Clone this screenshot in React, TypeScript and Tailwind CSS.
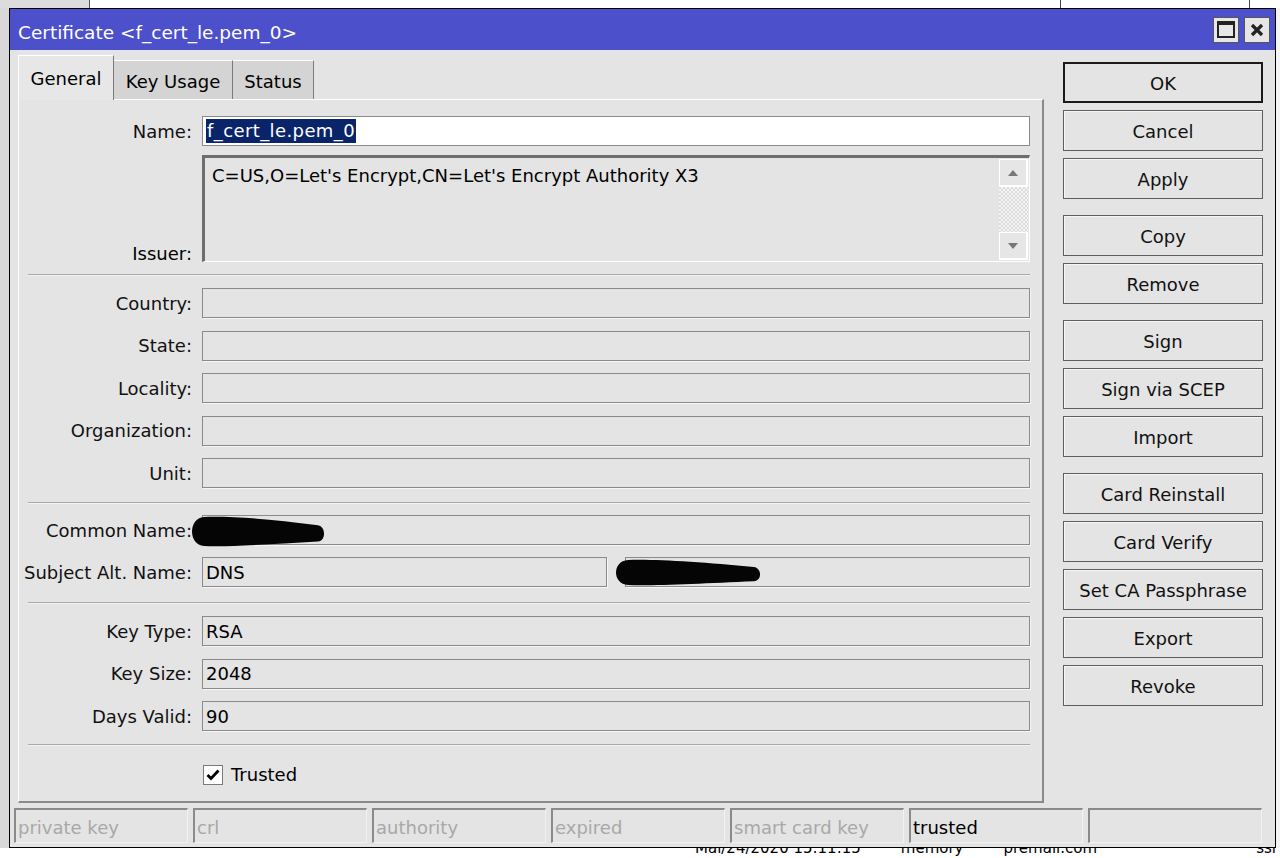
import React from "react";

const font = { fontFamily: '"DejaVu Sans", Verdana, sans-serif' };

const buttonGroups = [
  ["OK", "Cancel", "Apply"],
  ["Copy", "Remove"],
  ["Sign", "Sign via SCEP", "Import"],
  ["Card Reinstall", "Card Verify", "Set CA Passphrase", "Export", "Revoke"],
];

const statusCells = [
  { text: "private key", on: false },
  { text: "crl", on: false },
  { text: "authority", on: false },
  { text: "expired", on: false },
  { text: "smart card key", on: false },
  { text: "trusted", on: true },
  { text: "", on: false },
];

function Field({ value, className = "" }: { value?: string; className?: string }) {
  return (
    <div
      className={`h-[30px] border border-[#8a8a8a] bg-[#e4e4e4] shadow-[1px_1px_0_#f6f6f6] flex items-center pl-[3px] text-black ${className}`}
    >
      {value}
    </div>
  );
}

function Row({ label, children }: { label: string; children?: React.ReactNode }) {
  return (
    <div className="relative flex items-center">
      <div className="w-[173px] text-right text-[#111] whitespace-nowrap">{label}</div>
      <div className="ml-[10px] w-[828px] flex">{children}</div>
    </div>
  );
}

function Separator() {
  return <div className="ml-[9px] w-[1002px] border-t border-[#a9a9a9] border-b border-b-[#f3f3f3]" />;
}

function Redaction({ w, h, className }: { w: number; h: number; className: string }) {
  return (
    <svg width={w} height={h} viewBox={`0 0 ${w} ${h}`} className={`absolute ${className}`}>
      <path
        d={`M14 1 C40 0 ${w * 0.6} 3 ${w - 8} ${h * 0.3} C${w} ${h * 0.35} ${w} ${h * 0.8} ${w - 8} ${h * 0.82} C${w * 0.6} ${h * 0.9} 40 ${h} 14 ${h - 1} C-2 ${h - 2} -2 2 14 1 Z`}
        fill="#050505"
      />
    </svg>
  );
}

export default function App() {
  return (
    <div className="relative w-[1280px] h-[858px] overflow-hidden bg-white text-[18px]" style={font}>
      {/* window behind */}
      <div className="flex h-[8px]">
        <div className="w-[90px] bg-[#dcdcdc] border-r border-[#555]" />
        <div className="flex-1" />
        <div className="w-[190px] border-l border-r border-[#444] mr-[30px]" />
      </div>

      <div className="flex">
        <div className="w-[9px] bg-[#d8d8d8]" />
        {/* dialog */}
        <div className="flex flex-col w-[1267px] h-[840px] border border-black bg-[#e4e4e4]">
          {/* title bar */}
          <div className="h-[41px] bg-[#4d50cb] flex items-center pl-[8px] pr-[5px]">
            <span className="text-white text-[18.5px] pt-[7px]">Certificate &lt;f_cert_le.pem_0&gt;</span>
            <div className="ml-auto flex gap-[5px]">
              <div className="w-[26px] h-[26px] bg-[#e6e6e6] border border-[#555] flex items-center justify-center">
                <div className="w-[18px] h-[17px] border-2 border-t-[4px] border-[#222]" />
              </div>
              <div className="w-[26px] h-[26px] bg-[#e6e6e6] border border-[#555] flex items-center justify-center">
                <svg width="16" height="16" viewBox="0 0 16 16">
                  <path d="M3 3 L13 13 M13 3 L3 13" stroke="#222" strokeWidth="3.2" />
                </svg>
              </div>
            </div>
          </div>

          {/* body */}
          <div className="flex pl-[8px] pt-[5px]">
            <div className="w-[1026px] flex flex-col">
              {/* tabs */}
              <div className="flex items-end h-[44px]">
                <div className="h-[45px] w-[96px] bg-[#e7e7e7] border-t border-l border-white border-r border-r-[#7a7a7a] flex items-center justify-center -mb-px relative z-10">
                  General
                </div>
                <div className="h-[39px] w-[119px] bg-[#d4d4d4] border-t border-white border-r border-r-[#7a7a7a] flex items-center justify-center pt-[3px]">
                  Key Usage
                </div>
                <div className="h-[39px] w-[81px] bg-[#d4d4d4] border-t border-white border-r border-r-[#7a7a7a] flex items-center justify-center pt-[3px]">
                  Status
                </div>
              </div>

              {/* panel */}
              <div className="h-[704px] bg-[#e4e4e4] border-t border-l border-white border-r-2 border-r-[#8a8a8a] border-b-2 border-b-[#8a8a8a] pt-[16px] flex flex-col">
                <Row label="Name:">
                  <div className="h-[30px] w-full border border-[#8a8a8a] bg-white flex items-center pl-[3px]">
                    <span className="bg-[#0a246a] text-white px-[1px] leading-[24px] tracking-[0.4px]">f_cert_le.pem_0</span>
                  </div>
                </Row>

                <div className="flex items-end mt-[9px]">
                  <div className="w-[173px] text-right relative top-[5px]">Issuer:</div>
                  <div className="ml-[10px] w-[828px] h-[107px] bg-[#e4e4e4] border-t-[3px] border-l-[3px] border-[#6e6e6e] border-r border-b border-r-white border-b-white flex">
                    <div className="flex-1 pl-[7px] pt-[4px]">C=US,O=Let's Encrypt,CN=Let's Encrypt Authority X3</div>
                    <div className="w-[30px] flex flex-col pr-[1px] py-[1px]">
                      <div className="h-[28px] bg-[#e6e6e6] border-t border-l border-white border-r-2 border-b-2 border-[#555] flex items-center justify-center">
                        <svg width="12" height="8" viewBox="0 0 12 8">
                          <path d="M6 1 L11 7 L1 7 Z" fill="#777" />
                        </svg>
                      </div>
                      <div className="flex-1 bg-[repeating-conic-gradient(#f4f4f4_0%_25%,#dcdcdc_0%_50%)] bg-[length:4px_4px]" />
                      <div className="h-[28px] bg-[#e6e6e6] border-t border-l border-white border-r-2 border-b-2 border-[#555] flex items-center justify-center">
                        <svg width="12" height="8" viewBox="0 0 12 8">
                          <path d="M1 1 L11 1 L6 7 Z" fill="#777" />
                        </svg>
                      </div>
                    </div>
                  </div>
                </div>

                <div className="mt-[12px]">
                  <Separator />
                </div>

                <div className="mt-[12px] flex flex-col gap-[12.5px]">
                  <Row label="Country:"><Field className="w-full" /></Row>
                  <Row label="State:"><Field className="w-full" /></Row>
                  <Row label="Locality:"><Field className="w-full" /></Row>
                  <Row label="Organization:"><Field className="w-full" /></Row>
                  <Row label="Unit:"><Field className="w-full" /></Row>
                </div>

                <div className="mt-[14px]">
                  <Separator />
                </div>

                <div className="mt-[11px] flex flex-col gap-[12px]">
                  <Row label="Common Name:">
                    <Field className="w-full" />
                    <Redaction w={136} h={31} className="left-[171px] top-[1px]" />
                  </Row>
                  <Row label="Subject Alt. Name:">
                    <Field value="DNS" className="w-[405px]" />
                    <Field className="w-[405px] ml-[18px]" />
                    <Redaction w={148} h={27} className="left-[595px] top-[2px]" />
                  </Row>
                </div>

                <div className="mt-[15px]">
                  <Separator />
                </div>

                <div className="mt-[12px] flex flex-col gap-[12.5px]">
                  <Row label="Key Type:"><Field value="RSA" className="w-full" /></Row>
                  <Row label="Key Size:"><Field value="2048" className="w-full" /></Row>
                  <Row label="Days Valid:"><Field value="90" className="w-full" /></Row>
                </div>

                <div className="mt-[13px]">
                  <Separator />
                </div>

                <div className="mt-[15px] flex items-center pl-[184px]">
                  <div className="w-[20px] h-[20px] bg-white border border-[#7a7a7a] flex items-center justify-center">
                    <svg width="14" height="12" viewBox="0 0 14 12">
                      <path d="M1.5 6 L5 9.5 L12.5 1.5" stroke="#000" strokeWidth="2.8" fill="none" />
                    </svg>
                  </div>
                  <span className="ml-[8px]">Trusted</span>
                </div>
              </div>
            </div>

            {/* buttons */}
            <div className="ml-[19px] w-[200px] pt-[7px] flex flex-col gap-[16px]">
              {buttonGroups.map((group, gi) => (
                <div key={gi} className="flex flex-col gap-[7px]">
                  {group.map((b) => (
                    <div
                      key={b}
                      className={`h-[41px] flex items-center justify-center bg-[#e4e4e4] text-[#111] pt-[1px] ${
                        b === "OK"
                          ? "border-2 border-[#1a1a1a]"
                          : "border border-[#5e5e5e] shadow-[inset_1px_1px_0_#f6f6f6]"
                      }`}
                    >
                      {b}
                    </div>
                  ))}
                </div>
              ))}
            </div>
          </div>

          {/* status bar */}
          <div className="mt-[5px] pl-[4px] pr-[13px] grid grid-cols-7 gap-[5px]">
            {statusCells.map((c, i) => (
              <div
                key={i}
                className={`h-[35px] border-t-2 border-l-2 border-[#8a8a8a] border-r border-b border-r-[#f2f2f2] border-b-[#f2f2f2] flex items-center pl-[2px] pt-[2px] ${
                  c.on ? "text-black" : "text-[#a8a8a8]"
                }`}
              >
                {c.text}
              </div>
            ))}
          </div>
        </div>
        <div className="flex-1 bg-[#f4f4f4]" />
      </div>

      {/* window behind, bottom strip */}
      <div className="h-[10px] overflow-hidden pl-[695px] flex gap-[40px] text-[15px] leading-[10px] text-black">
        <span className="-mt-[5px]">Mai/24/2020 15:11:15</span>
        <span className="-mt-[5px]">memory</span>
        <span className="-mt-[5px]">premail.com</span>
        <span className="-mt-[5px] ml-auto mr-[4px]">ssl</span>
      </div>
    </div>
  );
}
